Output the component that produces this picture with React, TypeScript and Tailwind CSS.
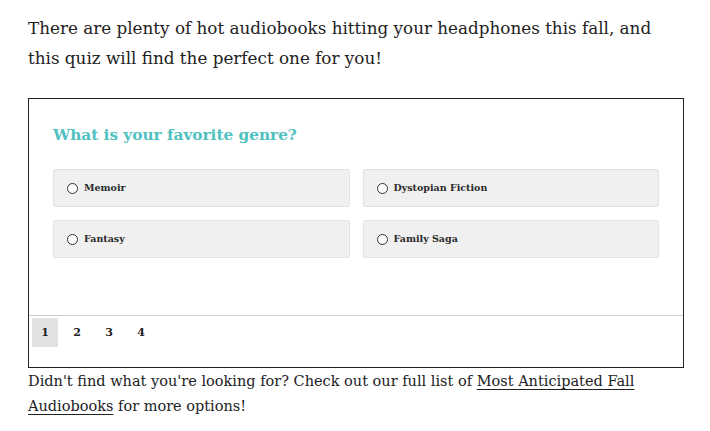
const OPTIONS = ['Memoir', 'Dystopian Fiction', 'Fantasy', 'Family Saga']
const PAGES = [1, 2, 3, 4]

export default function App() {
  return (
    <div className="w-[710px] h-[431px] bg-white px-[28px] pt-[13px] text-[#222]">
      {/* Intro */}
      <p className="font-['DejaVu_Serif',serif] text-[16.8px] leading-[30px] text-[#222]">
        There are plenty of hot audiobooks hitting your headphones this fall, and this quiz will find the perfect one for you!
      </p>

      {/* Quiz box */}
      <div className="mt-[25px] h-[270px] w-[656px] border border-[#222] flex flex-col">
        <div className="flex-1 px-[24px] pt-[21px]">
          <h2 className="font-['DejaVu_Serif',serif] font-bold text-[15.3px] leading-[30px] text-[#4fc1c0]">
            What is your favorite genre?
          </h2>
          <div className="mt-[19px] grid grid-cols-2 gap-x-[13px] gap-y-[13px]">
            {OPTIONS.map((opt) => (
              <div
                key={opt}
                className="h-[38px] bg-[#f0f0f0] border border-[#e3e3e3] rounded-[2px] flex items-center pl-[13px] gap-[6px]"
              >
                <span className="w-[11px] h-[11px] rounded-full border border-[#333] bg-white shrink-0" />
                <span className="font-['DejaVu_Serif',serif] font-bold text-[9.5px] text-[#2a2a2a]">{opt}</span>
              </div>
            ))}
          </div>
        </div>

        {/* Pagination */}
        <div className="h-[52px] border-t border-[#cfcfcf] flex items-start pt-[2px] pl-[3px] gap-[6px]">
          {PAGES.map((n) => (
            <div
              key={n}
              className={`w-[26px] h-[29px] pt-[2px] flex items-center justify-center font-['DejaVu_Serif',serif] font-bold text-[11px] text-[#222] ${
                n === 1 ? 'bg-[#e2e2e2]' : ''
              }`}
            >
              {n}
            </div>
          ))}
        </div>
      </div>

      {/* Footer text */}
      <p className="font-['DejaVu_Serif',serif] text-[14.5px] leading-[25px] text-[#222] mt-[1px]">
        Didn't find what you're looking for? Check out our full list of{' '}
        <a className="underline underline-offset-[3px] decoration-[#222]">Most Anticipated Fall</a>{' '}
        <a className="underline underline-offset-[3px] decoration-[#222]">Audiobooks</a> for more options!
      </p>
    </div>
  )
}
